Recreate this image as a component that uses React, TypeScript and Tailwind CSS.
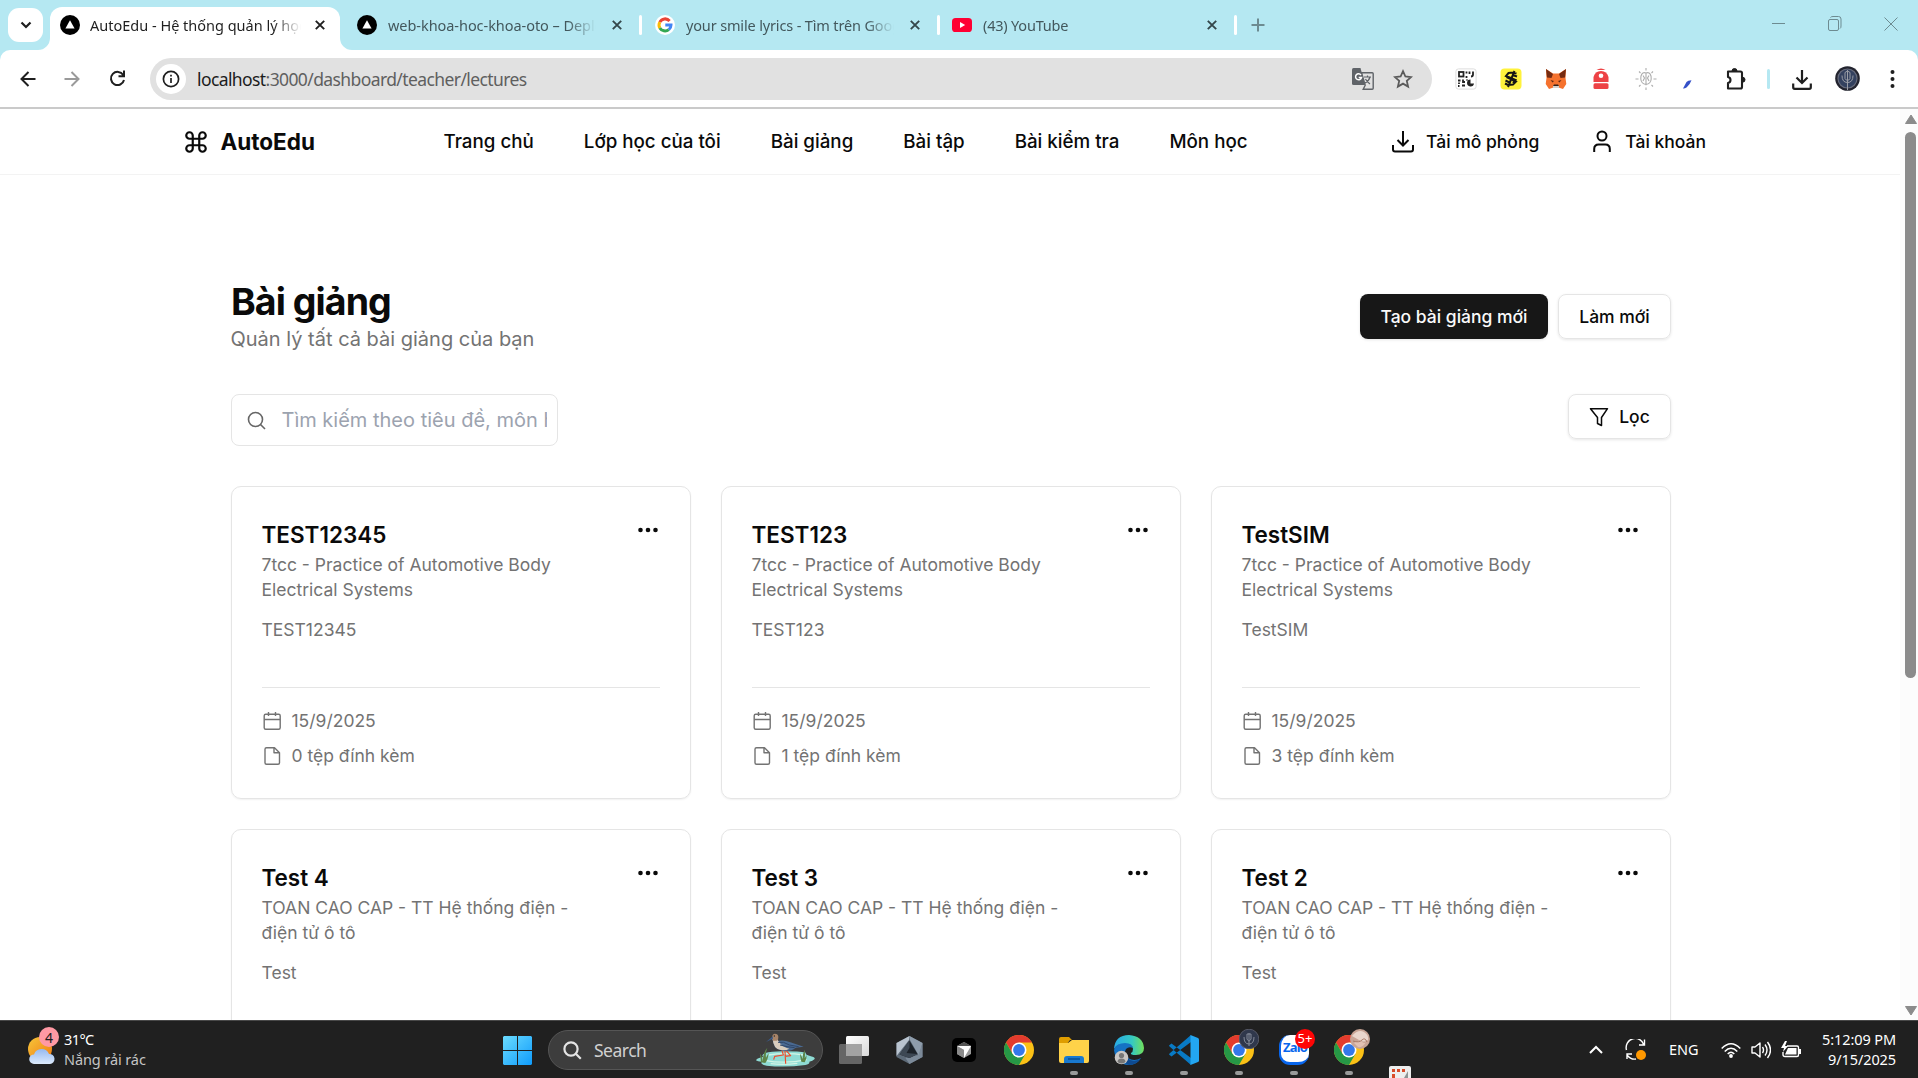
import React from "react";

const SEGOE = "font-['Noto_Sans',sans-serif]";

function Triangle() {
  return (
    <svg width="20" height="20" viewBox="0 0 20 20" className="shrink-0">
      <circle cx="10" cy="10" r="10" fill="#000" />
      <path d="M10 5.2 L14.6 13.4 H5.4 Z" fill="#fff" />
    </svg>
  );
}
function Google() {
  return (
    <svg width="20" height="20" viewBox="0 0 20 20" className="shrink-0">
      <circle cx="10" cy="10" r="10" fill="#fff" />
      <g fill="none" strokeWidth="3">
        <path d="M14.6 5.9 A6 6 0 0 0 4.8 7.1" stroke="#ea4335" />
        <path d="M4.8 7.1 A6 6 0 0 0 4.8 12.9" stroke="#fbbc05" />
        <path d="M4.8 12.9 A6 6 0 0 0 13.8 14.6" stroke="#34a853" />
        <path d="M13.8 14.6 A6 6 0 0 0 16 10 H10.3" stroke="#4285f4" />
      </g>
    </svg>
  );
}
function YouTube() {
  return (
    <svg width="20" height="20" viewBox="0 0 20 20" className="shrink-0">
      <rect y="3" width="20" height="14" rx="3.6" fill="#ff0033" />
      <path d="M8 7 L13.2 10 L8 13 Z" fill="#fff" />
    </svg>
  );
}
function Cross({ color }: { color: string }) {
  return (
    <svg width="10" height="10" viewBox="0 0 10 10" className="shrink-0">
      <path d="M.8.8 9.2 9.2M9.2.8.8 9.2" stroke={color} strokeWidth="1.9" />
    </svg>
  );
}

const tabs = [
  { icon: <Triangle />, title: "web-khoa-hoc-khoa-oto – Deployments", w: "w-[302px] pl-[17px]", tracking: "tracking-[-0.05px]" },
  { icon: <Google />, title: "your smile lyrics - Tìm trên Google", w: "w-[298px] pl-[13px]", tracking: "tracking-[-0.15px]" },
  { icon: <YouTube />, title: "(43) YouTube", w: "w-[297px] pl-[12px]", tracking: "tracking-[-0.2px]" },
];
const fade = "[mask-image:linear-gradient(to_right,#000_calc(100%-28px),transparent)]";

function TabStrip() {
  return (
    <div className={`flex h-[50px] bg-[#b5e8f2] text-[14.5px] ${SEGOE}`}>
      <div className="ml-2 mt-2 flex h-[34px] w-[35px] items-center justify-center rounded-[11px] bg-white">
        <svg width="12" height="8" viewBox="0 0 12 8"><path d="M1.5 1.5 6 6l4.5-4.5" fill="none" stroke="#1f1f1f" strokeWidth="2.2" /></svg>
      </div>
      <div className="relative ml-[7px] mt-[7px] flex h-[43px] w-[290px] items-center rounded-t-[12px] bg-white pb-[7px] pl-[10px] text-[#1f1f1f]">
        <svg className="absolute -left-3 bottom-0" width="12" height="12"><path d="M12 0V12H0A12 12 0 0 0 12 0" fill="#fff" /></svg>
        <svg className="absolute -right-3 bottom-0" width="12" height="12"><path d="M0 0V12H12A12 12 0 0 1 0 0" fill="#fff" /></svg>
        <Triangle />
        <div className={`ml-[10px] w-[211px] overflow-hidden whitespace-nowrap pt-[2px] ${fade}`}>AutoEdu - Hệ thống quản lý học tập</div>
        <span className="ml-[14px]"><Cross color="#1f1f1f" /></span>
      </div>
      {tabs.map((t) => (
        <div key={t.title} className={`flex h-[50px] items-center text-[#43585d] ${t.w}`}>
          {t.icon}
          <div className={`ml-[11px] w-[208px] overflow-hidden whitespace-nowrap pt-px ${t.tracking} ${fade}`}>{t.title}</div>
          <span className="ml-[16px]"><Cross color="#34474b" /></span>
          <span className="ml-auto h-5 w-[3px] rounded bg-white" />
        </div>
      ))}
      <div className="flex w-[42px] items-center justify-center">
        <svg width="14" height="14"><path d="M7 .5v13M.5 7h13" stroke="#6d8b91" strokeWidth="2" /></svg>
      </div>
      <div className="ml-auto flex h-[48px] items-center gap-[42px] pr-[20px]">
        <svg width="14" height="14"><path d="M0 6.5h13" stroke="#6d8b91" /></svg>
        <svg width="14" height="16" fill="none" stroke="#6d8b91"><rect x=".5" y="3.5" width="10" height="11" rx="1.5" /><path d="M2.5 1.5Q3 .5 5 .5h5.5q2.5 0 2.5 2.5v7q0 2-1 2.5" /></svg>
        <svg width="14" height="14"><path d="M.5.5l13 13M13.5.5l-13 13" stroke="#6d8b91" /></svg>
      </div>
    </div>
  );
}

const extensions = [
  <svg width="22" height="22" viewBox="0 0 22 22" fill="none" stroke="#222" strokeWidth="1.8">
    <rect x=".9" y=".9" width="20.2" height="20.2" rx="2.5" stroke="#ddd" strokeWidth="1" fill="#fff" />
    <rect x="4" y="4" width="4.5" height="4.5" /><path d="M11.5 3.5v2M11.5 8v2M14.5 3.5v2.500M18 3.500v3q0 2-2 2M3 12.500h2.500M8 11.500v2.500h2M4 14.500v1.500M7 17.500h3M3 18h1.500M11.500 12h1" />
    <path d="M15.500 11.500a3.500 3.500 0 1 0 3.500 4h-3.500z" fill="#222" stroke="none" />
  </svg>,
  <svg width="22" height="22" viewBox="0 0 22 22">
    <rect x=".5" y=".5" width="21" height="21" rx="4" fill="#fff23c" />
    <path d="M16.500 5.500 13.500 4.500 8.500 5 6 8l9.500 4-2.500 3M17 8.500l-4.500-1.500M5 15.500l3 1.500 5-.5 3-3-9.500-4.500M14.500 3l-6.500 16M5.500 12.500l4 2" fill="none" stroke="#151515" strokeWidth="2" />
  </svg>,
  <svg width="22" height="22" viewBox="0 0 22 22">
    <path d="M1 1 8 5.500h6L21 1l-.5 9 .8 6-3.300 5-4.500-1.500h-5L4 21 .7 16 1.500 10z" fill="#f5722e" />
    <path d="M1 1l7 5-1.500 4L2 9.500zM21 1l-7 5 1.500 4 4.500-.5z" fill="#742b12" />
    <path d="M8 17.500h6v2.500H8z" fill="#d5d0cb" /><path d="m8 18 1-1.500h4l1 1.500z" fill="#352018" />
    <path d="m5.500 12 3.500 1-1.500 1.500zM16.500 12l-3.500 1 1.500 1.500z" fill="#5f2813" />
  </svg>,
  <svg width="16" height="22" viewBox="0 0 16 22"><path d="M3.500 2Q8-1 12.500 2z" fill="#ed4245" /><path d="M.5 14V9Q2 3 8 3t7.500 6v5z" fill="#ed4245" /><rect x=".5" y="15.200" width="15" height="5.800" rx="1.500" fill="#ed4245" /><circle cx="8" cy="7.700" r="2.300" fill="#fff" /></svg>,
  <svg width="22" height="22" viewBox="0 0 22 22" fill="none" stroke="#adadad" strokeWidth="1.100"><path d="M11 5C7 3.500 5.500 7.500 5.800 11S7.500 16 11 16.500zM11 5c4-1.500 5.500 2.500 5.200 6s-1.700 5-5.200 5.500zM11 5v12M8 7.500l1.500 2.500L8 13M14 7.500 12.500 10l1.500 3M11 0v2.500M11 19.500v2.500M.5 11h3M18.500 11h3M4 3.500l1.500 1.500M18 3.500 16.500 5M4 18.500l1.500-1.500M18 18.500 16.500 17" /></svg>,
  <svg width="22" height="22" viewBox="0 0 22 22"><path d="M3 20.500 6.500 14q1.200-1.700 5-1.700-1.500 4.500-5 7.200-1.700 1.200-3.500 1z" fill="#3450c8" /></svg>,
];

function Toolbar() {
  return (
    <div className="flex bg-[#b5e8f2]">
      <div className={`flex h-[57px] w-full items-center rounded-t-[10px] bg-white ${SEGOE}`}>
        <div className="flex w-[150px] items-center pl-5">
          <svg width="16" height="16" fill="none" stroke="#1f1f1f" strokeWidth="2"><path d="M15.500 8H1.500M8.500 1 1.500 8l7 7" /></svg>
          <svg className="ml-[28px]" width="16" height="16" fill="none" stroke="#9a9a9a" strokeWidth="2"><path d="M0.500 8h14M7.500 1l7 7-7 7" /></svg>
          <svg className="ml-[29px]" width="17" height="17" fill="none" stroke="#1f1f1f" strokeWidth="2"><path d="M14.200 5A6.600 6.600 0 1 0 15 10M15 .5v5.700H9.500" /></svg>
        </div>
        <div className="flex h-[42px] w-[1282px] items-center rounded-full bg-[#e1e1e1] pl-[6px] pr-[19px]">
          <div className="flex size-[30px] items-center justify-center rounded-full bg-white">
            <svg width="18" height="18" fill="none" stroke="#1f1f1f" strokeWidth="1.700"><circle cx="9" cy="9" r="7.600" /><path d="M9 8v5M9 4.700v1.700" /></svg>
          </div>
          <div className="ml-[11px] whitespace-nowrap pt-px text-[17.5px] tracking-[-0.6px] text-[#5f5f5f]"><span className="text-[#1c1c1c]">localhost</span>:3000/dashboard/teacher/lectures</div>
          <svg className="ml-auto" width="22" height="22" viewBox="0 0 22 22"><path d="M1.500 0h7l4.500 17H1.500Q0 17 0 15.500v-14Q0 0 1.500 0z" fill="#5f6368" /><path d="M9.500 4.700H20.200q1 0 1 1v14.500q0 1-1 1h-9l2-4z" fill="#e1e1e1" stroke="#5f6368" strokeWidth="1.400" /><path d="M12 9h7M15.500 7.500V9M18 9q-1 4-5 6M13.500 11q1.500 3 4.500 5" fill="none" stroke="#5f6368" strokeWidth="1.200" /><path d="M9 7A3 3 0 1 0 9.500 9.500H6.700" fill="none" stroke="#fff" strokeWidth="1.500" /></svg>
          <svg className="ml-[19px]" width="20" height="20" viewBox="0 0 20 20"><path d="m10 2.200 2.400 5.300 5.700.6-4.300 3.800 1.300 5.700-5.100-3-5.100 3 1.300-5.700L1.900 8.100l5.700-.6z" fill="none" stroke="#5a5a5a" strokeWidth="1.800" /></svg>
        </div>
        <div className="ml-[11px] flex items-center pt-px">
          {extensions.map((e, i) => <span key={i} className="flex w-[45px] justify-center">{e}</span>)}
        </div>
        <div className="ml-[12px] flex items-center">
          <svg width="22" height="24" viewBox="0 0 22 24"><path d="M3 4.500H15.500q1.500 0 1.500 1.500V20q0 1.500-1.500 1.500H3V16q2.500-.5 2.500-3T3 10z" fill="none" stroke="#1f1f1f" strokeWidth="2.100" strokeLinejoin="round" /><path d="M7 4a2.500 2.500 0 0 1 5 0zM17.500 10.200a2.500 2.500 0 0 1 0 5z" fill="#1f1f1f" stroke="#1f1f1f" /></svg>
          <span className="ml-[20px] h-5 w-[3px] rounded bg-[#b5e8f2]" />
          <svg className="ml-[22px] mt-[2px]" width="20" height="20" fill="none" stroke="#1f1f1f" strokeWidth="2.200"><path d="M10 0v12.500M4.500 7.500 10 13l5.500-5.500M1.200 13.500v3.800q0 1.500 1.500 1.500h14.600q1.500 0 1.500-1.500v-3.800" /></svg>
          <svg className="ml-[23px]" width="25" height="25"><circle cx="12.500" cy="12.500" r="12.300" fill="#23242f" /><circle cx="12.500" cy="12.500" r="9.500" fill="#33415f" stroke="#666b7c" strokeWidth="1.200" /><path d="M10 6.500v6q2.500 4 5 0v-6q-2.500-3-5 0M12.500 4v20M7 9.500q0 7 5.500 7t5.500-7" fill="none" stroke="#9a9da6" strokeWidth="1" /></svg>
          <svg className="ml-[30px]" width="5" height="22" fill="#1f1f1f"><circle cx="2.500" cy="4" r="2" /><circle cx="2.500" cy="11" r="2" /><circle cx="2.500" cy="18" r="2" /></svg>
        </div>
      </div>
    </div>
  );
}

const nav = ["Trang chủ", "Lớp học của tôi", "Bài giảng", "Bài tập", "Bài kiểm tra", "Môn học"];

function SiteHeader() {
  return (
    <header className="flex h-[66px] items-center border-b border-[#f3f3f3] pl-[183px] font-medium">
      <svg width="26" height="26" viewBox="0 0 24 24" fill="none" stroke="currentColor" strokeWidth="2"><path d="M15 6v12a3 3 0 1 0 3-3H6a3 3 0 1 0 3 3V6a3 3 0 1 0-3 3h12a3 3 0 1 0-3-3" /></svg>
      <span className="ml-[11.5px] w-[94px] whitespace-nowrap text-[22.5px] font-bold">AutoEdu</span>
      <nav className="ml-[129px] flex gap-[50px] whitespace-nowrap pt-[2px] text-[18.75px]">
        {nav.map((n) => <a key={n}>{n}</a>)}
      </nav>
      <div className="ml-auto flex items-center whitespace-nowrap pr-[194px] text-[17.5px]">
        <svg width="22" height="22" fill="none" stroke="currentColor" strokeWidth="2"><path d="M11 0v14M5.500 9l5.500 5.500L16.500 9M1 14v4.500q0 2 2 2h16q2 0 2-2V14" /></svg>
        <span className="ml-3 pt-[2px]">Tải mô phỏng</span>
        <svg className="ml-[54px]" width="18" height="23" fill="none" stroke="currentColor" strokeWidth="2"><circle cx="9" cy="6" r="4.500" /><path d="M1.200 22v-3q0-4.500 4.500-4.500h6.600q4.500 0 4.500 4.500v3" /></svg>
        <span className="ml-[14px] pt-[2px]">Tài khoản</span>
      </div>
    </header>
  );
}

const body = "7tcc - Practice of Automotive Body Electrical Systems";
const math = "TOAN CAO CAP - TT Hệ thống điện - điện tử ô tô";
const cards = [
  { title: "TEST12345", desc: body, note: "TEST12345", files: 0 },
  { title: "TEST123", desc: body, note: "TEST123", files: 1 },
  { title: "TestSIM", desc: body, note: "TestSIM", files: 3 },
  { title: "Test 4", desc: math, note: "Test", files: 0 },
  { title: "Test 3", desc: math, note: "Test", files: 0 },
  { title: "Test 2", desc: math, note: "Test", files: 0 },
];

function Card({ c }: { c: (typeof cards)[number] }) {
  return (
    <article className="h-[313px] rounded-[10px] border border-[#e5e5e5] px-[30px] pt-[30px] text-[17.5px] leading-[25px] text-[#737373] shadow-[0_1px_2px_rgba(0,0,0,0.06)]">
      <div className="flex justify-between">
        <div className="-ml-[0.5px] w-[320px] pt-[6px]">
          <h2 className="text-[22.5px] font-semibold leading-[23px] tracking-[-0.02px] text-[#0a0a0a]">{c.title}</h2>
          <p className="pt-[6px]">{c.desc}</p>
        </div>
        <svg className="mr-[2.5px] mt-[9.5px]" width="20" height="6" fill="#0a0a0a"><circle cx="2.500" cy="3" r="2.300" /><circle cx="10" cy="3" r="2.300" /><circle cx="17.500" cy="3" r="2.300" /></svg>
      </div>
      <p className="-ml-[0.5px] mt-[15px] h-[45px]">{c.note}</p>
      <div className="mt-[25px] flex flex-col gap-[10px] border-t border-[#e5e5e5] pt-[20px]">
        <div className="flex items-center gap-[9.5px]">
          <svg width="20" height="20" fill="none" stroke="#737373" strokeWidth="1.400"><rect x="2.200" y="3.200" width="16" height="15" rx="1.500" /><path d="M2.200 8.500h16M6.500 1v4M13.500 1v4" /></svg>
          15/9/2025
        </div>
        <div className="flex items-center gap-[9.5px]">
          <svg width="20" height="20" fill="none" stroke="#737373" strokeWidth="1.400" strokeLinejoin="round"><path d="M4.500 1.700h8l5 5v10.100q0 1.500-1.500 1.500H4.500q-1.500 0-1.500-1.500V3.200q0-1.500 1.500-1.500zM12 1.700v5h5.500" /></svg>
          {c.files} tệp đính kèm
        </div>
      </div>
    </article>
  );
}

function Page() {
  const btn = "flex h-[45px] items-center justify-center rounded-[8px] text-[17.5px] font-medium whitespace-nowrap shadow-[0_1px_3px_rgba(0,0,0,0.1)]";
  return (
    <main className="flex h-[911px] overflow-hidden font-['Inter',sans-serif] text-[#0a0a0a]">
      <div className="w-[1900px]">
        <SiteHeader />
        <div className="ml-[231px] w-[1440px] pt-[105px]">
          <div className="flex h-[114px] justify-between">
            <div className="-mt-px">
              <h1 className="text-[37.5px] font-bold leading-[45px] tracking-[-0.94px]">Bài giảng</h1>
              <p className="-ml-[0.5px] text-[20px] leading-[30px] text-[#737373]">Quản lý tất cả bài giảng của bạn</p>
            </div>
            <div className="flex gap-[10px] pt-[14px]">
              <button className={`${btn} w-[188px] bg-[#171717] pt-[2px] text-[#fafafa]`}>Tạo bài giảng mới</button>
              <button className={`${btn} w-[113px] border border-[#e5e5e5] pt-[2px]`}>Làm mới</button>
            </div>
          </div>
          <div className="flex h-[92px] items-start justify-between">
            <div className="flex h-[52px] w-[327px] items-center rounded-[8px] border border-[#e5e5e5] pl-[15px] pr-[10px]">
              <svg width="19" height="19" fill="none" stroke="#666" strokeWidth="1.600"><circle cx="8.500" cy="8.500" r="7" /><path d="m13.500 13.500 4.500 4.500" /></svg>
              <span className="ml-[15.5px] w-[266px] overflow-hidden whitespace-nowrap text-[20px] text-[#9ca3af]">Tìm kiếm theo tiêu đề, môn học</span>
            </div>
            <button className={`${btn} w-[103px] gap-[10px] border border-[#e5e5e5]`}>
              <svg width="20" height="20" fill="none" stroke="#0a0a0a" strokeWidth="1.500" strokeLinejoin="round"><path d="M1.500 1.700h17L12.500 10.500v8L8.500 16.500v-6z" /></svg>
              <span className="pt-[2px]">Lọc</span>
            </button>
          </div>
          <div className="grid grid-cols-3 gap-[30px]">{cards.map((c) => <Card key={c.title} c={c} />)}</div>
        </div>
      </div>
      <div className="flex w-[18px] flex-col items-center bg-[#fcfcfc] pl-[3px] pt-[5px]">
        <svg className="shrink-0" width="14" height="11"><path d="M7 1 12.500 9.500H1.500z" fill="#8b8b8b" stroke="#8b8b8b" strokeLinejoin="round" /></svg>
        <div className="mt-[7px] h-[546px] w-[11px] shrink-0 rounded-full bg-[#8b8b8b]" />
        <svg className="mb-[4px] mt-auto shrink-0" width="14" height="11"><path d="M7 10 12.500 1.500H1.500z" fill="#8b8b8b" stroke="#8b8b8b" strokeLinejoin="round" /></svg>
      </div>
    </main>
  );
}

function Chrome() {
  return (
    <svg width="30" height="30" viewBox="0 0 30 30">
      <circle cx="15" cy="15" r="15" fill="#fbc116" />
      <path d="M2 7.500A15 15 0 0 1 28 7.500H15L8.500 18.700z" fill="#e33b2e" />
      <path d="M2 7.500A15 15 0 0 0 15 30l6.500-11.200-13 0z" fill="#269846" />
      <circle cx="15" cy="15" r="7.500" fill="#fff" /><circle cx="15" cy="15" r="5.900" fill="#3478ea" />
    </svg>
  );
}

function Bird() {
  return (
    <svg className="ml-auto mr-px shrink-0" width="59" height="34" viewBox="52 42 177 102">
      <path d="M52 124q4-8 22-10-8-6 6-12 20-6 60-5 40 0 62 4-4 5 10 9 18 4 16 10-6 6-16 8 2 8-12 10-60 8-116 2-22-4-14-12-14 0-18-4z" fill="#8fdcd4" />
      <path d="M90 108q50-8 106 0M78 124q60 12 126-2M96 134q40 4 80-1" stroke="#d2f5e6" strokeWidth="4" fill="none" />
      <path d="M130 94l4 14-26 4-3 10M142 94l14 16-18 2M139 96l2 38" stroke="#ee4b2b" strokeWidth="3.500" fill="none" strokeLinejoin="round" />
      <path d="M118 58q2 6-1 8 18-5 38 4l40 13-24 3q-14 12-38 9-24-3-28-20l-4-15z" fill="#4a6a92" />
      <path d="M102 60q2 30 24 33 16 2 26-4-20-2-32-22l-6-8z" fill="#d9cdbd" />
      <path d="M118 70q16-4 34 8l28 5M124 78q20 6 44 8" fill="none" stroke="#2f4668" strokeWidth="3" />
      <path d="M101 58q-2-12 7-14 12 0 11 12 0 6-4 9l-12 0z" fill="#a88468" />
      <path d="M103 52l-21 17 20-10z" fill="#3c5c8c" /><circle cx="107" cy="51" r="2" fill="#222" />
      <path d="M67 130q-2-22-4-28 8 10 9 24 2-28 14-40-6 16-4 30l8-14q-2 20-10 30zM188 128q-4-16-4-24 6 8 8 16 0-18 6-28 2 14 0 26l6-10q0 14-6 22z" fill="#5d8548" />
    </svg>
  );
}

function Cell({ children, run }: { children: React.ReactNode; run?: boolean }) {
  return (
    <div className="relative flex h-[57px] w-[55px] shrink-0 items-center justify-center">
      <div className="relative mt-px">{children}</div>
      {run && <span className="absolute bottom-[3px] h-[4px] w-2 rounded-full bg-[#9a9a9a]" />}
    </div>
  );
}

function Taskbar() {
  return (
    <footer className={`flex h-[58px] border-t border-[#484848] bg-[#202020] text-white ${SEGOE}`}>
      <div className="flex w-[490px] pl-[28px] pt-[6px]">
        <div className="relative h-[40px] w-[31px]">
          <svg width="28" height="38"><defs><linearGradient id="sun" x2="1" y2="1"><stop stopColor="#f6c63a" /><stop offset="1" stopColor="#f17a12" /></linearGradient><linearGradient id="cl" x2="0" y2="1"><stop stopColor="#95b9ef" /><stop offset="1" stopColor="#dceafc" /></linearGradient></defs><circle cx="12" cy="22" r="12" fill="url(#sun)" /><path d="M6 37a4.800 4.800 0 0 1 0-9.600A8 8 0 0 1 21 27a5 5 0 0 1 1 10z" fill="url(#cl)" /></svg>
          <span className="absolute left-[11px] top-0 flex size-[20px] items-center justify-center rounded-full bg-[#ff99a4] text-[14px] text-[#1b1b1b]">4</span>
        </div>
        <div className="ml-[5px] pt-[2px] text-[14.5px] leading-[20px] tracking-[-0.6px]">31°C<div className="tracking-[-0.1px] text-[#c5c5c5]">Nắng rải rác</div></div>
      </div>
      <div className="flex w-[55px] items-center justify-center">
        <svg className="mt-px" width="29" height="29"><defs><linearGradient id="win" x2="1" y2="1"><stop stopColor="#6bdcff" /><stop offset="1" stopColor="#0f9bfb" /></linearGradient></defs><path d="M1 0H14V14H0V1zM15 0h13l1 1v13H15zM0 15H14V29H1l-1-1zM15 15H29V28l-1 1H15z" fill="url(#win)" /></svg>
      </div>
      <div className="ml-[3px] mt-[9px] flex h-10 w-[275px] items-center rounded-full border border-[#555] bg-[#3d3d3d] pl-[14px] pr-[6px]">
        <svg width="19" height="19" fill="none" stroke="#e4e4e4" strokeWidth="2.200"><circle cx="8" cy="8" r="6.600" /><path d="m12.800 12.800 5 5" /></svg>
        <span className="ml-[12px] pt-px text-[17.5px] tracking-[-0.5px] text-[#d0d0d0]">Search</span>
        <Bird />
      </div>
      <div className="ml-[3.5px] flex">
        <Cell><svg width="30" height="28"><defs><linearGradient id="tv" x2="1" y2="1"><stop stopColor="#fff" /><stop offset="1" stopColor="#d9d9d9" /></linearGradient></defs><rect x="0" y="8" width="23" height="20" rx="1.500" fill="#666" /><rect x="7" width="23" height="20" rx="1.500" fill="url(#tv)" /><path d="M7 8h16v12H7z" fill="#a3a3a3" /></svg></Cell>
        <Cell><svg width="27" height="28" viewBox="0 0 27 28"><path d="M13.500 0 26.500 7v14l-13 7L.5 21V7z" fill="#5d6a78" /><path d="M13.500 0 .5 7v13L13 4z" fill="#b9c4d0" /><path d="M13.500 0 26.500 7 23 20 14 4z" fill="#8e9cab" /><path d="M26.500 7v14l-13 7-4-6 13-3z" fill="#7c8a99" /><path d="M13.500 4.500 21.500 18l-8 4L3.500 18.500z" fill="#1c2229" /><path d="M13.500 4.500 3.500 18.500l10 3.500 8-4-11-1 3-5z" fill="#3d4854" /></svg></Cell>
        <Cell><svg width="24" height="24" viewBox="0 0 24 24"><rect width="24" height="24" rx="5" fill="#000" /><path d="m12 4 7 4v8l-7 4-7-4V8z" fill="#999" /><path d="M5 8h14l-7 12v-8z" fill="#fff" /><path d="m12 4 7 4H5z" fill="#555" /><path d="m5 8 7 4v8l-7-4z" fill="#8a8a8a" /></svg></Cell>
        <Cell><Chrome /></Cell>
        <Cell run><svg width="30" height="28" viewBox="0 0 30 28"><path d="M0 3Q0 1 2 1h8l3 3h-2l-3 4H0z" fill="#df9d00" /><path d="M0 7h9l4-3h17v21q0 2-2 2H2q-2 0-2-2z" fill="#ffd249" /><path d="M5 27v-4q0-3 3-3h14q3 0 3 3v4z" fill="#1979cf" /><path d="M9 23h12" stroke="#0a4e91" strokeWidth="1.500" /></svg></Cell>
        <Cell run>
          <svg width="30" height="30" viewBox="0 0 30 30">
            <defs><linearGradient id="eg" x2="1"><stop stopColor="#28a9e8" /><stop offset=".6" stopColor="#35c9c2" /><stop offset="1" stopColor="#72e05a" /></linearGradient></defs>
            <path d="M0 15Q3 7 12 7q7 0 7 6-4-2-7 1-3 5 2 9 6 4 13 0Q23 30 15 30 2 30 0 15z" fill="#1572c4" />
            <path d="M0 14Q1 0 15 0 29 1 30 13q0 7-8 7-6 0-5-2 2-1 2-4 0-6-8-6Q3 8 0 14z" fill="url(#eg)" />
            <path d="M11 17q0 8 9 9 4 0 7-3-4 7-12 7-9-3-4-13z" fill="#0e4a91" />
            <circle cx="7.500" cy="22.500" r="6.800" fill="#c9c7c5" /><circle cx="7.500" cy="20.500" r="2.600" fill="#777" /><path d="M3.500 27q0-3.500 4-3.500t4 3.500q-4 3-8 0" fill="#777" />
          </svg>
        </Cell>
        <Cell run><svg width="30" height="30" viewBox="0 0 30 30"><path d="M0 10.500 2.500 8.500 22 23v7L0.500 11.500zM0 19.500l2.500 2L22 7V0L.5 18.500z" fill="#087ac5" /><path d="M21.500 0 29 3q1 .5 1 1.500v21q0 1-1 1.500l-7.500 3z" fill="#23a7f2" /></svg></Cell>
        <Cell run><Chrome /><svg className="absolute -right-[5px] -top-[6px]" width="20" height="20"><circle cx="10" cy="10" r="9.800" fill="#30384c" stroke="#555866" /><path d="M8 5v5q2 4 4 0V5zM10 4v13M5 8q0 7 5 7t5-7" fill="none" stroke="#858b99" /></svg></Cell>
        <Cell run>
          <div className="flex size-[30px] items-center justify-center rounded-[11px] border-b-[3px] border-l-2 border-[#0866ed] bg-white pb-[2px] text-[13px] font-bold tracking-[-0.8px] text-[#0866ed]">Zalo</div>
          <span className="absolute -right-[6px] -top-[6px] flex size-[20px] items-center justify-center rounded-full bg-[#ff0505] text-[13px]">5+</span>
        </Cell>
        <Cell run><Chrome /><svg className="absolute -right-[6px] -top-[6px]" width="20" height="20"><circle cx="10" cy="10" r="10" fill="#c9a596" /><path d="M2 7Q8 0 14 3q5 3 4 8-4 3-9 0z" fill="#ead6cc" /><path d="M4 14q4-4 8-1 3 2 4 0-3 6-8 5z" fill="#e2c1b2" /><path d="M3 12q6 2 9-1t5 2" stroke="#a87864" fill="none" /></svg></Cell>
        <svg className="ml-[12.5px] mt-[45px]" width="22" height="12"><rect width="22" height="16" rx="2" fill="#eee" /><path d="M3 3h3v3H3zM8 3h3v3H8zM13 3h3v3h-3zM3 8h3v4H3z" fill="#d94b29" /><path d="m19 5-4 7h4z" fill="#8d9494" /></svg>
      </div>
      <div className="ml-auto flex items-center pr-[22px]">
        <svg width="14" height="9" fill="none" stroke="#fff" strokeWidth="2"><path d="m1 8 6-6 6 6" /></svg>
        <svg className="ml-[22px]" width="22" height="22" fill="none" stroke="#fff" strokeWidth="1.400"><path d="M1.500 11A9 9 0 0 1 19 6M19.500.5V6H14M2 20v-5h5M2 16q4 5 9 4" /><circle cx="16" cy="16" r="5" fill="#ff9800" stroke="none" /></svg>
        <span className="ml-[22px] w-[31px] pt-px text-[14.5px] tracking-[-0.1px]">ENG</span>
        <svg className="ml-[21px]" width="20" height="16" fill="none" stroke="#fff" strokeWidth="1.500"><path d="M.7 6.500Q10-3 19.300 6.500M3.700 9.500Q10 3 16.300 9.500M6.700 12Q10 8.500 13.300 12" /><circle cx="10" cy="14" r="1.900" fill="#fff" stroke="none" /></svg>
        <svg className="ml-[10px]" width="20" height="18" fill="none" stroke="#fff" strokeWidth="1.400" strokeLinejoin="round"><path d="M1 6v6h3l5 4V2L4 6zM11.500 6q2 3 0 6M14 3.500q4 5.500 0 11M16.500 1q6 8 0 16" /></svg>
        <svg className="ml-[10px]" width="20" height="18"><path d="M6 5h10q1.500 0 1.500 1.500v7.500q0 1.500-1.500 1.500H4Q2 15.500 2 13.500V11" fill="none" stroke="#fff" strokeWidth="1.400" /><path d="M7 7h8.500v6.500H4zM18 8h2v5h-2zM4 0 0 7h3L2 11l5-6H4l2-5z" fill="#fff" /></svg>
        <div className="ml-[19px] w-[76px] whitespace-nowrap pb-[2px] text-right text-[14.5px] leading-[20px] tracking-[-0.1px]">5:12:09 PM<br />9/15/2025</div>
      </div>
    </footer>
  );
}

export default function App() {
  return (
    <div className="h-[1078px] w-[1918px] overflow-hidden bg-white">
      <TabStrip />
      <Toolbar />
      <div className="h-[2px] bg-[#cacaca]" />
      <Page />
      <Taskbar />
    </div>
  );
}
